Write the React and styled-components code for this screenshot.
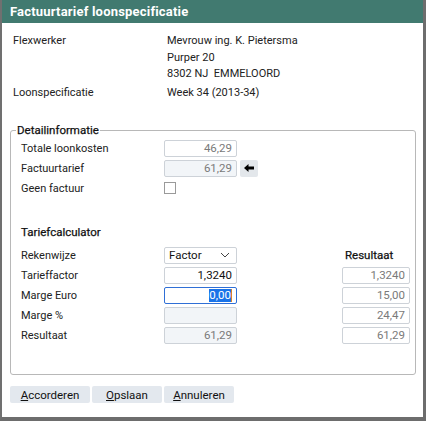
import styled, { createGlobalStyle } from 'styled-components';

const GlobalStyle = createGlobalStyle`
  html, body { margin: 0; padding: 0; background: #fff; }
  body { font-family: Roboto, "Liberation Sans", sans-serif; font-size: 11px; color: #222; }
`;

const Dialog = styled.div`
  width: 426px;
  height: 421px;
  box-sizing: border-box;
  border-left: 2px solid #707070;
  border-right: 3px solid #6d6d6d;
  border-bottom: 4px solid #6d6d6d;
  display: flex;
  flex-direction: column;
  background: #fff;
`;

const TitleBar = styled.div`
  height: 23px;
  background: #417a70;
  color: #fff;
  font-weight: 700;
  font-size: 13px;
  letter-spacing: 0.2px;
  display: flex;
  align-items: center;
  padding-left: 8px;
`;

const Body = styled.div`
  padding: 10px 7px 0 8px;
  display: flex;
  flex-direction: column;
`;

const InfoGrid = styled.div`
  display: grid;
  grid-template-columns: 154px 1fr;
  padding-left: 3px;
  row-gap: 2px;
  line-height: 16.5px;
`;

const InfoValue = styled.div`
  display: flex;
  flex-direction: column;
`;

const Fieldset = styled.fieldset`
  margin: 22px 0 0 0;
  padding: 0 0 10px 10px;
  border: 1px solid #b8b8b8;
  border-radius: 3px;
  height: 252px;
  box-sizing: border-box;
`;

const Legend = styled.legend`
  padding: 0 1px;
  margin-left: -5px;
  font-size: 11.5px;
  color: #111;
  -webkit-text-stroke: 0.25px currentColor;
`;

const FormGrid = styled.div`
  display: grid;
  grid-template-columns: 143px 73px 105px 68px;
  grid-auto-rows: 20px;
  align-items: center;
  margin-top: ${p => p.$top || 0}px;
`;

const Label = styled.div`
  color: #222;
`;

const Heading = styled.div`
  color: #111;
  font-size: 11.5px;
  -webkit-text-stroke: 0.25px currentColor;
  padding-left: ${p => p.$indent || 0}px;
`;

const SectionHeading = styled(Heading)`
  line-height: 14px;
  margin: 27px 0 0 0;
`;

const Input = styled.div`
  height: 17px;
  box-sizing: border-box;
  border: 1px solid ${p => (p.$focus ? '#2f6fd6' : '#cdd2d8')};
  border-radius: 2px;
  background: ${p => (p.$filled ? '#f2f5f8' : '#fff')};
  color: ${p => (p.$dim ? '#7a7a7a' : '#111')};
  display: flex;
  align-items: center;
  justify-content: flex-end;
  padding: 0 4px;
  font-size: 11.5px;
`;

const Selected = styled.span`
  background: #1a73e8;
  color: #fff;
  line-height: 13px;
  border-right: 1.5px solid #d9822b;
`;

const Select = styled.div`
  height: 17px;
  box-sizing: border-box;
  border: 1px solid #cdd2d8;
  border-radius: 2px;
  display: flex;
  align-items: center;
  justify-content: space-between;
  padding: 0 6px 0 4px;
  font-size: 11.5px;
  color: #111;
`;

const ArrowButton = styled.div`
  width: 18px;
  height: 17px;
  margin-left: 3px;
  background: #e3e7eb;
  border-radius: 2px;
  display: flex;
  align-items: center;
  justify-content: center;
`;

const Checkbox = styled.div`
  width: 12px;
  height: 12px;
  box-sizing: border-box;
  border: 1px solid #9a9a9a;
  background: #fff;
`;

const Buttons = styled.div`
  display: flex;
  gap: 2px;
  margin-top: 11px;
`;

const Button = styled.div`
  width: ${p => p.$w}px;
  height: 17px;
  background: #e3e8ee;
  border-radius: 2px;
  display: flex;
  align-items: center;
  justify-content: center;
  font-size: 11.5px;
  color: #111;
  u { text-decoration: underline; }
`;

const Chevron = () => (
  <svg width="10" height="6" viewBox="0 0 10 6">
    <path d="M1 1 L5 5 L9 1" fill="none" stroke="#444" strokeWidth="1" />
  </svg>
);

const LeftArrow = () => (
  <svg width="10" height="8" viewBox="0 0 10 8">
    <path d="M0 4 L4.5 0 L4.5 2.5 L10 2.5 L10 5.5 L4.5 5.5 L4.5 8 Z" fill="#000" />
  </svg>
);

export default function App() {
  return (
    <>
      <GlobalStyle />
      <Dialog>
        <TitleBar>Factuurtarief loonspecificatie</TitleBar>
        <Body>
          <InfoGrid>
            <Label>Flexwerker</Label>
            <InfoValue>
              <span>Mevrouw ing. K. Pietersma</span>
              <span>Purper 20</span>
              <span>8302 NJ&nbsp;&nbsp;EMMELOORD</span>
            </InfoValue>
            <Label>Loonspecificatie</Label>
            <InfoValue>
              <span>Week 34 (2013-34)</span>
            </InfoValue>
          </InfoGrid>

          <Fieldset>
            <Legend>Detailinformatie</Legend>
            <FormGrid $top={1}>
              <Label>Totale loonkosten</Label>
              <Input $dim>46,29</Input>
              <div />
              <div />

              <Label>Factuurtarief</Label>
              <Input $dim $filled>61,29</Input>
              <div><ArrowButton><LeftArrow /></ArrowButton></div>
              <div />

              <Label>Geen factuur</Label>
              <div><Checkbox /></div>
              <div />
              <div />
            </FormGrid>

            <SectionHeading>Tariefcalculator</SectionHeading>

            <FormGrid $top={6}>
              <Label>Rekenwijze</Label>
              <Select>Factor<Chevron /></Select>
              <div />
              <Heading $indent={3}>Resultaat</Heading>

              <Label>Tarieffactor</Label>
              <Input>1,3240</Input>
              <div />
              <Input $dim>1,3240</Input>

              <Label>Marge Euro</Label>
              <Input $focus><Selected>0,00</Selected></Input>
              <div />
              <Input $dim>15,00</Input>

              <Label>Marge %</Label>
              <Input $filled />
              <div />
              <Input $dim>24,47</Input>

              <Label>Resultaat</Label>
              <Input $dim $filled>61,29</Input>
              <div />
              <Input $dim>61,29</Input>
            </FormGrid>
          </Fieldset>

          <Buttons>
            <Button $w={80}><span><u>A</u>ccorderen</span></Button>
            <Button $w={70}><span><u>O</u>pslaan</span></Button>
            <Button $w={70}><span><u>A</u>nnuleren</span></Button>
          </Buttons>
        </Body>
      </Dialog>
    </>
  );
}
